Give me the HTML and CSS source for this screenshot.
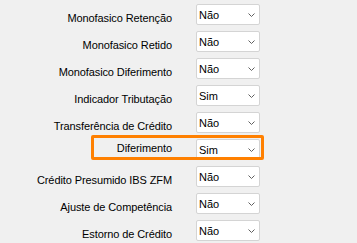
FILE: index.html
```html
<!DOCTYPE html>
<html lang="pt-br">
  <head>
    <meta charset="UTF-8" />
    <meta name="viewport" content="width=device-width, initial-scale=1.0" />
    <title>Parâmetros</title>
    <link rel="stylesheet" href="styles.css">
  </head>
  <body>
    <div class="campos">
      <div class="linha">
        <label>Monofasico Retenção</label>
        <div class="combo"><span>Não</span><svg width="7" height="4" viewBox="0 0 7 4"><polyline points="0.5,0.5 3.5,3.5 6.5,0.5" /></svg></div>
      </div>
      <div class="linha">
        <label>Monofasico Retido</label>
        <div class="combo"><span>Não</span><svg width="7" height="4" viewBox="0 0 7 4"><polyline points="0.5,0.5 3.5,3.5 6.5,0.5" /></svg></div>
      </div>
      <div class="linha">
        <label>Monofasico Diferimento</label>
        <div class="combo"><span>Não</span><svg width="7" height="4" viewBox="0 0 7 4"><polyline points="0.5,0.5 3.5,3.5 6.5,0.5" /></svg></div>
      </div>
      <div class="linha">
        <label>Indicador Tributação</label>
        <div class="combo"><span>Sim</span><svg width="7" height="4" viewBox="0 0 7 4"><polyline points="0.5,0.5 3.5,3.5 6.5,0.5" /></svg></div>
      </div>
      <div class="linha">
        <label>Transferência de Crédito</label>
        <div class="combo"><span>Não</span><svg width="7" height="4" viewBox="0 0 7 4"><polyline points="0.5,0.5 3.5,3.5 6.5,0.5" /></svg></div>
      </div>
      <div class="linha destaque">
        <label>Diferimento</label>
        <div class="combo"><span>Sim</span><svg width="7" height="4" viewBox="0 0 7 4"><polyline points="0.5,0.5 3.5,3.5 6.5,0.5" /></svg></div>
      </div>
      <div class="linha">
        <label>Crédito Presumido IBS ZFM</label>
        <div class="combo"><span>Não</span><svg width="7" height="4" viewBox="0 0 7 4"><polyline points="0.5,0.5 3.5,3.5 6.5,0.5" /></svg></div>
      </div>
      <div class="linha">
        <label>Ajuste de Competência</label>
        <div class="combo"><span>Não</span><svg width="7" height="4" viewBox="0 0 7 4"><polyline points="0.5,0.5 3.5,3.5 6.5,0.5" /></svg></div>
      </div>
      <div class="linha">
        <label>Estorno de Crédito</label>
        <div class="combo"><span>Não</span><svg width="7" height="4" viewBox="0 0 7 4"><polyline points="0.5,0.5 3.5,3.5 6.5,0.5" /></svg></div>
      </div>
    </div>
  </body>
</html>
```

FILE: styles.css
```css
body {
  margin: 0;
  background-color: #f0f0f0;
  font-family: "Liberation Sans", Arial, sans-serif;
  font-size: 11px;
  color: #000;
}
.campos {
  padding-top: 4px;
}
.linha {
  position: relative;
  display: grid;
  grid-template-columns: 172px 64px;
  column-gap: 24px;
  height: 27px;
}
.linha label {
  text-align: right;
  line-height: 21px;
  padding-top: 4px;
  white-space: nowrap;
  letter-spacing: -0.1px;
}
.destaque label {
  line-height: 19px;
  padding-top: 0;
}
.combo {
  height: 21px;
  box-sizing: border-box;
  background-color: #fff;
  border: 1px solid #d4d4d4;
  border-radius: 2px;
  display: flex;
  align-items: center;
  justify-content: space-between;
  padding: 1px 4px 0 2px;
  line-height: 18px;
}
.combo svg {
  fill: none;
  stroke: #606060;
  stroke-width: 1;
}
.destaque::before {
  content: "";
  position: absolute;
  left: 91px;
  top: -4px;
  width: 173px;
  height: 25px;
  box-sizing: border-box;
  border: 3px solid #ff8000;
  border-radius: 2px;
  pointer-events: none;
}
```
